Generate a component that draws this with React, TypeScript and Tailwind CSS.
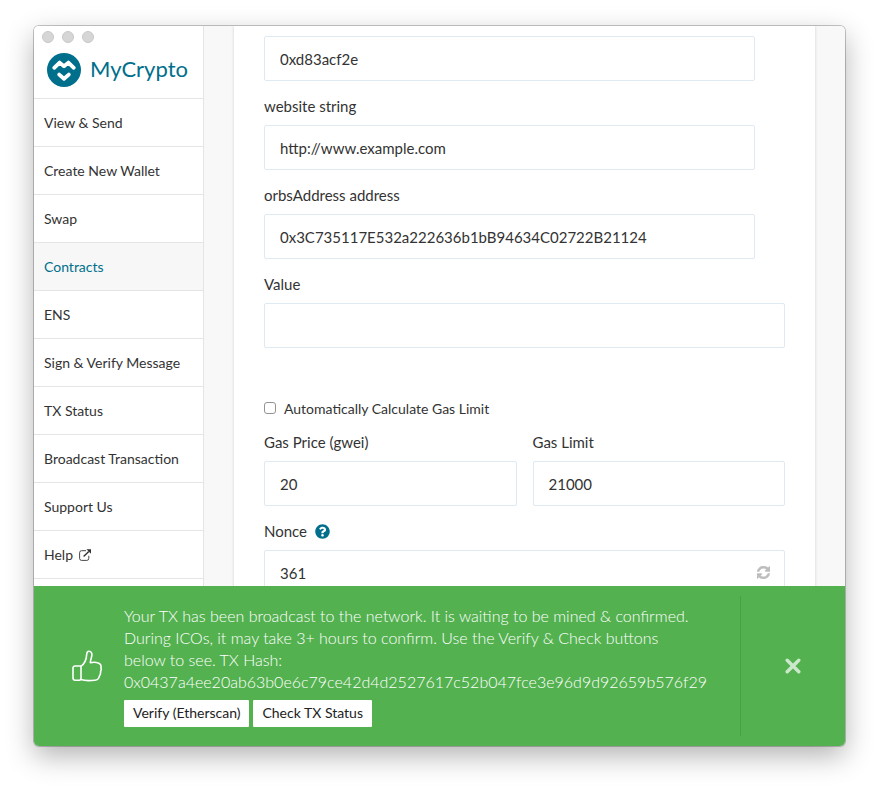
import { useState } from "react";
import type { ReactNode } from "react";
import { FaQuestionCircle } from "react-icons/fa";

const NAV = [
  "View & Send",
  "Create New Wallet",
  "Swap",
  "Contracts",
  "ENS",
  "Sign & Verify Message",
  "TX Status",
  "Broadcast Transaction",
  "Support Us",
  "Help",
];

function LogoMark() {
  return (
    <svg viewBox="0 0 34 34" className="size-[34px] shrink-0" aria-hidden="true">
      <circle cx="17" cy="17" r="17" fill="#006f8c" />
      <g fill="none" stroke="#fff" strokeWidth="3.8" strokeLinecap="round" strokeLinejoin="round">
        <path d="M7.2 14.8 L12.6 9.6 L17 13.2 L21.4 9.6 L26.8 14.8" />
        <path d="M12.2 21.6 L17 25.8 L21.8 21.6" />
      </g>
    </svg>
  );
}

function ExternalIcon() {
  return (
    <svg viewBox="0 0 12 12" className="size-3" fill="none" stroke="currentColor" aria-hidden="true">
      <path d="M7 1.7H2.6Q.6 1.7 .6 3.7V9.4Q.6 11.4 2.6 11.4H7.8Q9.8 11.4 9.8 9.4V6.8" strokeWidth="0.9" />
      <path d="M4.6 7.6L9.8 2.4" strokeWidth="1.4" />
      <path d="M7.4 .2H12V4.8Z" fill="currentColor" stroke="none" />
    </svg>
  );
}

function RefreshIcon() {
  return (
    <svg viewBox="0 0 1536 1536" className="size-[13px]" fill="currentColor" stroke="currentColor" strokeWidth="60" aria-hidden="true">
      <path d="M1511 928q0 5-1 7-64 268-268 434.5t-478 166.5q-146 0-282.5-55t-243.5-157l-129 129q-19 19-45 19t-45-19-19-45v-448q0-26 19-45t45-19h448q26 0 45 19t19 45-19 45l-137 137q71 66 161 102t187 36q134 0 250-65t186-179q11-17 53-117 8-23 30-23h192q13 0 22.5 9.5t9.5 22.5zm25-800v448q0 26-19 45t-45 19h-448q-26 0-45-19t-19-45 19-45l138-138q-148-137-349-137-134 0-250 65t-186 179q-11 17-53 117-8 23-30 23h-199q-13 0-22.5-9.5t-9.5-22.5v-7q65-268 270-434.5t480-166.5q146 0 284 55.5t245 156.5l130-129q19-19 45-19t45 19 19 45z" />
    </svg>
  );
}

function ThumbIcon() {
  return (
    <svg
      viewBox="0 0 30 32"
      className="h-8 w-[30px]"
      fill="none"
      stroke="#fff"
      strokeWidth="1.6"
      strokeLinecap="round"
      strokeLinejoin="round"
      aria-hidden="true"
    >
      <path d="M9 16H3.2Q1 16 1 18.2V28Q1 30.2 3.2 30.2H7.6Q9 30.2 9 28.6Z" />
      <path d="M9 16.2C12 14.2 14.4 9.4 14.7 4.4C14.8 2.4 15.7 1.2 17 1.2C19.4 1.2 20.3 3.6 19.7 6.4C19.2 8.8 18.3 10.8 18.3 12.8C20.6 12.2 24.8 12.4 26.8 13.2C28.7 14 29.4 15.8 28.9 17.6C29.4 19.2 29.2 20.6 28.5 21.8C28.8 23.6 28.3 25 27.4 26C27 28.6 25.4 30 22.8 30.2C18.6 30.8 12 30.6 8.6 29.6" />
    </svg>
  );
}

function Field({
  id,
  label,
  value,
  help,
  action,
}: {
  id: string;
  label: string;
  value: string;
  help?: ReactNode;
  action?: ReactNode;
}) {
  const [text, setText] = useState(value);
  return (
    <div>
      <div className="flex h-6 items-center gap-2">
        <label htmlFor={id}>{label}</label>
        {help}
      </div>
      <div className="relative mt-[7px]">
        <input
          id={id}
          type="text"
          value={text}
          onChange={(e) => setText(e.target.value)}
          className="block h-[45px] w-full rounded-[2px] border border-[#dfe9f1] bg-white px-[15px] text-[15px] text-[#333] outline-none focus:border-[#006f8c]"
        />
        {action}
      </div>
    </div>
  );
}

export default function App() {
  const [auto, setAuto] = useState(false);
  const [open, setOpen] = useState(true);
  return (
    <div className="h-screen bg-white px-[34px] pt-[26px] pb-[42px] font-['Lato','Liberation_Sans',sans-serif] text-[15px] text-[#333]">
      <div className="flex h-full flex-col overflow-hidden rounded-[5px] shadow-[0_0_0_1px_rgba(0,0,0,0.22),0_10px_28px_rgba(0,0,0,0.3)]">
        <div className="flex min-h-0 flex-1 overflow-hidden bg-[#f8f8f8]">
          <aside className="w-[170px] shrink-0 border-r border-[#e5e5e5] bg-white">
            <div className="h-[73px] border-b border-[#e5e5e5] pt-[5px]">
              <div className="flex gap-2 pl-2">
                <span className="size-3 rounded-full border border-[#c8c8c8] bg-[#d6d6d6]" />
                <span className="size-3 rounded-full border border-[#c8c8c8] bg-[#d6d6d6]" />
                <span className="size-3 rounded-full border border-[#c8c8c8] bg-[#d6d6d6]" />
              </div>
              <a href="#home" className="mt-[10px] flex items-start gap-[9px] pl-[13px] text-[#006f8c]">
                <LogoMark />
                <span className="text-[22px] leading-8">MyCrypto</span>
              </a>
            </div>
            <nav className="text-[14px]">
              {NAV.map((item) => (
                <a
                  key={item}
                  href="#nav"
                  className={
                    item === "Contracts"
                      ? "flex h-12 items-center gap-[6px] border-b border-[#e5e5e5] bg-[#f7f7f7] px-[10px] text-[#006f8c]"
                      : "flex h-12 items-center gap-[6px] border-b border-[#e5e5e5] px-[10px]"
                  }
                >
                  {item}
                  {item === "Help" && <ExternalIcon />}
                </a>
              ))}
            </nav>
          </aside>

          <main className="min-w-0 flex-1 px-[30px]">
            <form className="bg-white px-[30px] shadow-[0_0_3px_rgba(0,0,0,0.16)]" onSubmit={(e) => e.preventDefault()}>
              <div className="flex flex-col gap-[13px] pr-[30px]">
                <div className="pt-[10px]">
                  <input
                    aria-label="bytes4"
                    type="text"
                    defaultValue="0xd83acf2e"
                    className="block h-[45px] w-full rounded-[2px] border border-[#dfe9f1] bg-white px-[15px] text-[15px] text-[#333] outline-none focus:border-[#006f8c]"
                  />
                </div>
                <Field id="website" label="website string" value="http://www.example.com" />
                <Field
                  id="orbs"
                  label="orbsAddress address"
                  value="0x3C735117E532a222636b1bB94634C02722B21124"
                />
              </div>
              <div className="mt-[13px]">
                <Field id="value" label="Value" value="" />
              </div>
              <label className="mt-12 flex h-6 w-fit items-center gap-2 text-[14px]">
                <input
                  type="checkbox"
                  checked={auto}
                  onChange={(e) => setAuto(e.target.checked)}
                  className="size-3 appearance-none rounded-[3px] border border-[#949494] bg-white checked:bg-[#006f8c]"
                />
                Automatically Calculate Gas Limit
              </label>
              <div className="mt-[10px] grid grid-cols-2 gap-4">
                <Field id="price" label="Gas Price (gwei)" value="20" />
                <Field id="limit" label="Gas Limit" value="21000" />
              </div>
              <div className="mt-[13px] pb-[30px]">
                <Field
                  id="nonce"
                  label="Nonce"
                  value="361"
                  help={
                    <button type="button" aria-label="About the nonce" className="text-[#006f8c]">
                      <FaQuestionCircle className="size-[15px]" />
                    </button>
                  }
                  action={
                    <button
                      type="button"
                      aria-label="Refresh nonce"
                      className="absolute inset-y-0 right-[15px] flex items-center text-[#bdbdbd]"
                    >
                      <RefreshIcon />
                    </button>
                  }
                />
              </div>
            </form>
          </main>
        </div>

        {open && (
          <section role="status" className="flex h-40 shrink-0 items-center bg-[#54b150] text-white">
            <div className="flex w-[90px] shrink-0 items-center justify-end pr-[22px]">
              <ThumbIcon />
            </div>
            <div className="min-w-0 flex-1 pr-[50px]">
              <p className="text-[16px] leading-[22px] font-light">
                Your TX has been broadcast to the network. It is waiting to be mined &amp; confirmed. During ICOs, it
                may take 3+ hours to confirm. Use the Verify &amp; Check buttons below to see. TX Hash:
                0x0437a4ee20ab63b0e6c79ce42d4d2527617c52b047fce3e96d9d92659b576f29
              </p>
              <div className="mt-[7px] flex gap-1 text-[14px] text-[#222]">
                <button type="button" className="h-[27px] rounded-[1px] bg-white px-[9px] pb-[2px]">
                  Verify (Etherscan)
                </button>
                <button type="button" className="h-[27px] rounded-[1px] bg-white px-[9px] pb-[2px]">
                  Check TX Status
                </button>
              </div>
            </div>
            <div className="flex h-[140px] w-[105px] shrink-0 items-center justify-center border-l border-[#4ba047]">
              <button type="button" aria-label="Close" onClick={() => setOpen(false)}>
                <svg viewBox="0 0 16 16" className="size-4" stroke="#cce8cb" strokeWidth="3.4" strokeLinecap="round" aria-hidden="true">
                  <path d="M2.2 2.2L13.8 13.8M13.8 2.2L2.2 13.8" />
                </svg>
              </button>
            </div>
          </section>
        )}
      </div>
    </div>
  );
}
